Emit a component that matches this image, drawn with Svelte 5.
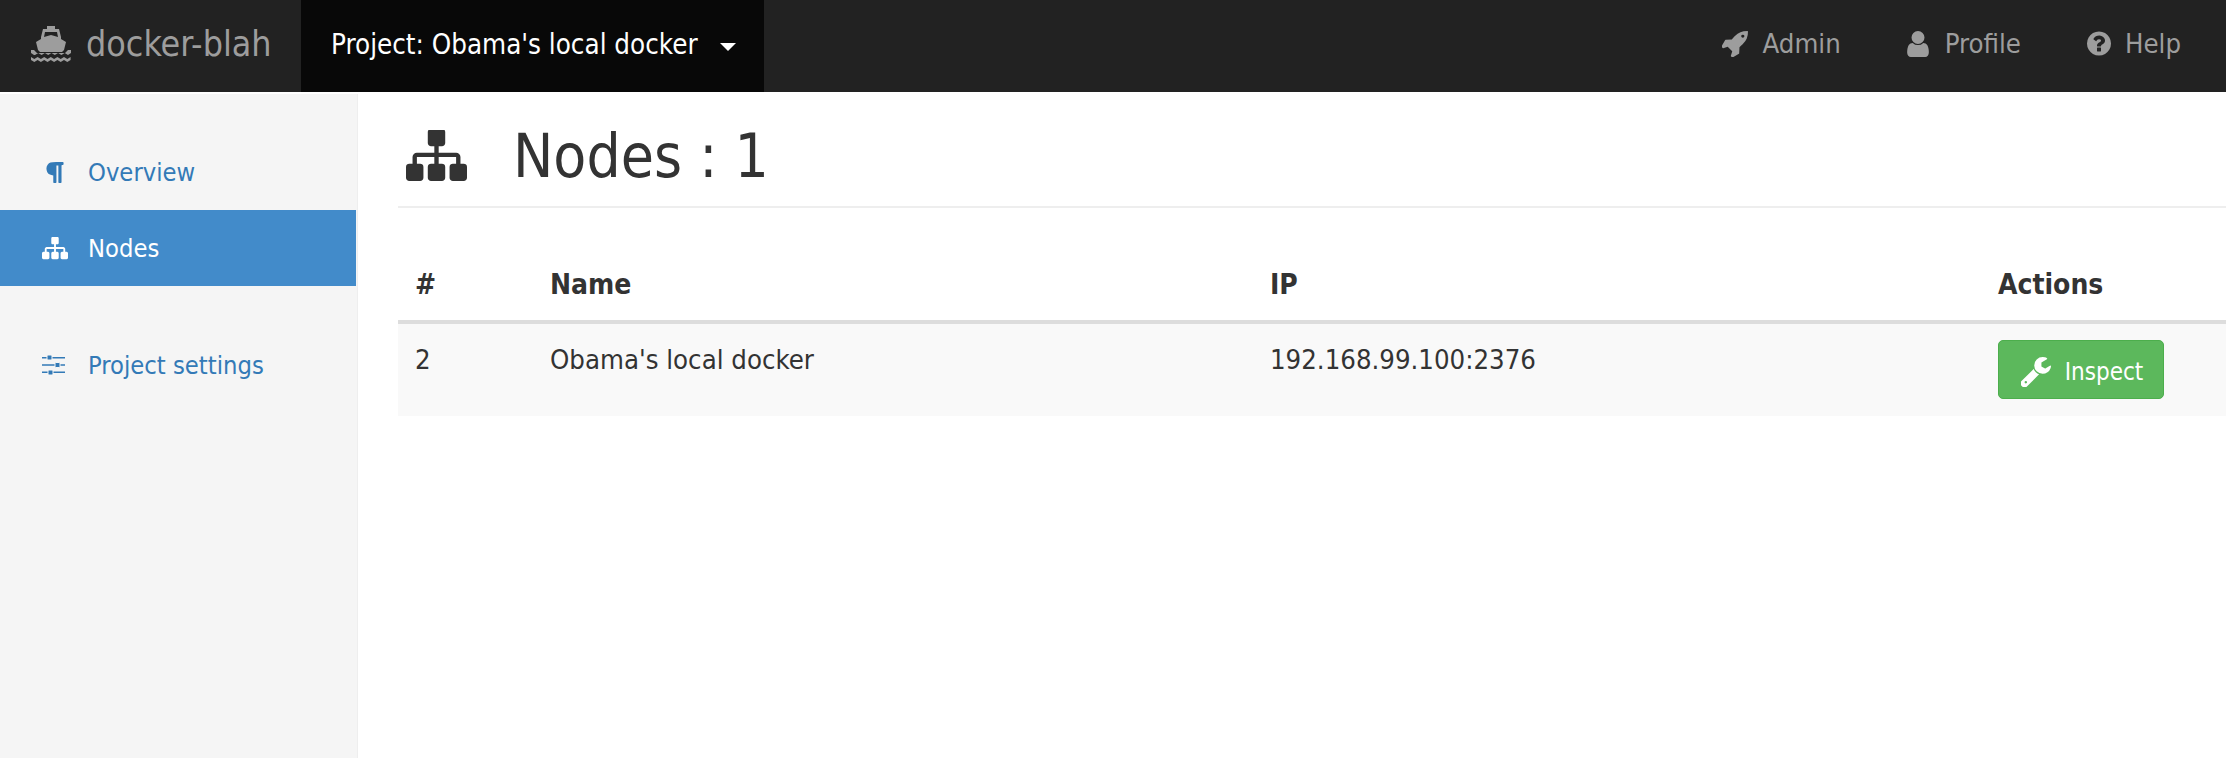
<script>
    const paths = {
        user: "M1536 1399q0 109-62.500 187t-150.500 78h-854q-88 0-150.500-78t-62.500-187q0-85 8.500-160.500t31.500-152 58.500-131 94-89 134.500-34.500q131 128 313 128t313-128q76 0 134.500 34.500t94 89 58.500 131 31.500 152 8.500 160.500zm-256-887q0 159-112.500 271.500t-271.500 112.500-271.500-112.500-112.500-271.500 112.500-271.500 271.500-112.500 271.500 112.500 112.500 271.500z",
        help: "M1024 1376v-192q0-14-9-23t-23-9h-192q-14 0-23 9t-9 23v192q0 14 9 23t23 9h192q14 0 23-9t9-23zm256-672q0-88-55.500-163t-138.500-116-170-41q-243 0-371 213-15 24 8 42l132 100q7 6 19 6 16 0 25-12 53-68 86-92 34-24 86-24 48 0 85.500 26t37.500 59q0 38-20 61t-68 45q-63 28-115.500 86.500t-52.500 125.500v36q0 14 9 23t23 9h192q14 0 23-9t9-23q0-19 21.500-49.500t54.500-49.500q32-18 49-28.500t46-35 44.500-48 28-60.500 12.500-81zm384 192q0 209-103 385.500t-279.500 279.500-385.500 103-385.500-103-279.500-279.500-103-385.500 103-385.500 279.500-279.500 385.500-103 385.500 103 279.500 279.500 103 385.500z",
        rocket: "M1504 448q0-40-28-68t-68-28-68 28-28 68 28 68 68 28 68-28 28-68zm224-288q0 249-75.500 430.500t-253.500 360.500q-81 80-195 176l-20 379q-2 16-16 26l-384 224q-7 4-16 4-12 0-23-9l-64-64q-13-14-8-32l85-276-281-281-276 85q-3 1-9 1-14 0-23-9l-64-64q-17-19-5-39l224-384q10-14 26-16l379-20q96-114 176-195 188-187 358-258t431-71q14 0 24 9.500t10 22.500z",
        wrench: "M448 1472q0-26-19-45t-45-19-45 19-19 45 19 45 45 19 45-19 19-45zm644-420l-682 682q-37 37-90 37-52 0-91-37l-106-108q-38-36-38-90 0-53 38-91l681-681q39 98 114.500 173.500t173.500 114.500zm634-435q0 39-23 106-47 134-164.500 217.500t-258.500 83.500q-185 0-316.500-131.500t-131.500-316.500 131.500-316.500 316.500-131.500q58 0 121.500 16.500t107.500 46.500q16 11 16 28t-16 28l-293 169v224l193 107q5-3 79-48.500t135.500-81 70.500-35.500q15 0 23.500 10t8.500 25z",
        sitemap: "M1792 1248v320q0 40-28 68t-68 28h-320q-40 0-68-28t-28-68v-320q0-40 28-68t68-28h96v-192h-512v192h96q40 0 68 28t28 68v320q0 40-28 68t-68 28h-320q-40 0-68-28t-28-68v-320q0-40 28-68t68-28h96v-192h-512v192h96q40 0 68 28t28 68v320q0 40-28 68t-68 28h-320q-40 0-68-28t-28-68v-320q0-40 28-68t68-28h96v-192q0-52 38-90t90-38h512v-192h-96q-40 0-68-28t-28-68v-320q0-40 28-68t68-28h320q40 0 68 28t28 68v320q0 40-28 68t-68 28h-96v192h512q52 0 90 38t38 90v192h96q40 0 68 28t28 68z",
        paragraph: "M1534 189v73q0 29-18.500 61t-42.500 32q-50 0-54 1-26 6-32 31-3 11-3 64v1152q0 25-18 43t-43 18h-108q-25 0-43-18t-18-43v-1218h-143v1218q0 25-17.500 43t-43.500 18h-108q-26 0-43.500-18t-17.500-43v-496q-147-12-245-59-126-58-192-179-64-117-64-259 0-166 88-286 88-118 209-159 111-37 417-37h479q25 0 43 18t18 43z"
    };

    const rows = [{ id: 2, name: "Obama's local docker", ip: "192.168.99.100:2376" }];
</script>

<header class="navbar">
    <div class="brand">
        <svg class="ship" viewBox="0 0 40 36" aria-hidden="true">
            <path d="M16 0h8v3h4l2 8v2l5 3-2 8-2 2H9l-2-2-2-8 5-3v-2l2-8h4zM14 6l-1 5 7-2 7 2-1-5z" fill-rule="evenodd" />
            <path d="M0 24h3l3 3h28l3-3h3v3l-3 2-3.300-2-3.300 2-3.300-2-3.300 2-3.300-2-3.300 2-3.300-2-3.300 2-3.300-2-3.300 2L3 29l-3-2z" />
            <path d="M0 31l3.300 2 3.300-2 3.300 2 3.300-2 3.300 2 3.300-2 3.300 2 3.300-2 3.300 2 3.300-2 3.300 2 3.300-2v3l-3.300 2-3.300-2-3.300 2-3.300-2-3.300 2-3.300-2-3.300 2-3.300-2-3.300 2-3.300-2-3.300 2-3.300-2z" />
        </svg>
        <span>docker-blah</span>
    </div>
    <div class="project">
        <span>Project: Obama's local docker</span>
        <i class="caret"></i>
    </div>
    <nav class="links">
        <a href="#admin"><svg class="i-rocket" viewBox="128 128 1600 1600"><path d={paths.rocket} /></svg>Admin</a>
        <a class="wide" href="#profile"><svg class="i-user" viewBox="256 128 1280 1536"><path d={paths.user} /></svg>Profile</a>
        <a href="#help"><svg class="i-help" viewBox="128 128 1536 1536"><path d={paths.help} /></svg>Help</a>
    </nav>
</header>

<div class="body">
    <aside class="sidebar">
        <a class="item" href="#overview">
            <span class="slot"><svg class="i-para" viewBox="280 128 1254 1536"><path d={paths.paragraph} /></svg></span>
            Overview
        </a>
        <a class="item active" href="#nodes">
            <span class="slot"><svg class="i-map" viewBox="0 192 1792 1472"><path d={paths.sitemap} /></svg></span>
            Nodes
        </a>
        <a class="item spaced" href="#settings">
            <span class="slot">
                <svg class="i-sliders" viewBox="0 0 23 20">
                    <path d="M0 2h23v1.500H0zM0 9.300h23v1.500H0zM0 16.500h23V18H0z" />
                    <rect x="5" y="0" width="5" height="5" rx="1" stroke="#f5f5f5" />
                    <rect x="13" y="7.500" width="5" height="5" rx="1" stroke="#f5f5f5" />
                    <rect x="6" y="15" width="5" height="5" rx="1" stroke="#f5f5f5" />
                </svg>
            </span>
            Project settings
        </a>
    </aside>

    <main class="content">
        <div class="page-head">
            <svg class="i-title" viewBox="0 192 1792 1472"><path d={paths.sitemap} /></svg>
            <h1>Nodes : 1</h1>
        </div>

        <table>
            <thead>
                <tr>
                    <th class="c-id">#</th>
                    <th class="c-name">Name</th>
                    <th class="c-ip">IP</th>
                    <th>Actions</th>
                </tr>
            </thead>
            <tbody>
                {#each rows as row}
                    <tr>
                        <td>{row.id}</td>
                        <td>{row.name}</td>
                        <td>{row.ip}</td>
                        <td>
                            <button>
                                <svg viewBox="128 128 1598 1600"><path d={paths.wrench} /></svg>
                                Inspect
                            </button>
                        </td>
                    </tr>
                {/each}
            </tbody>
        </table>
    </main>
</div>

<style>
    :global(body) {
        background: #fff;
        color: #333;
        font-family: "DejaVu Sans", sans-serif;
        font-stretch: condensed;
        font-size: 27.3px;
        height: 758px;
        overflow: hidden;
    }

    svg {
        fill: currentColor;
        display: block;
    }

    a {
        text-decoration: none;
    }

    .navbar {
        display: flex;
        height: 92px;
        background: #222;
        color: #9d9d9d;
        align-items: stretch;
    }

    .brand {
        width: 301px;
        box-sizing: border-box;
        padding: 0 0 5px 31px;
        display: flex;
        align-items: center;
        gap: 15px;
        font-size: 35.500px;
    }

    .ship {
        width: 40px;
        height: 36px;
        margin-top: 1px;
    }

    .project {
        width: 463px;
        box-sizing: border-box;
        background: #080808;
        color: #fff;
        padding: 0 0 5px 30px;
        display: flex;
        align-items: center;
        gap: 22px;
        font-size: 27.500px;
    }

    .caret {
        width: 0;
        height: 0;
        border-top: 8px solid #fff;
        border-left: 8px solid transparent;
        border-right: 8px solid transparent;
        margin-top: 6px;
    }

    .links {
        margin-left: auto;
        padding: 0 45px 5px 0;
        display: flex;
        align-items: center;
        gap: 66px;
    }

    .links a {
        color: #9d9d9d;
        display: flex;
        align-items: center;
        gap: 14px;
    }

    .links a.wide {
        gap: 16px;
    }

    .i-rocket { width: 26px; height: 26px; }
    .i-user { width: 22px; height: 26px; }
    .i-help { width: 24px; height: 25px; }

    .body {
        display: flex;
        height: 666px;
    }

    .sidebar {
        width: 357px;
        box-sizing: content-box;
        margin-top: 2px;
        padding-top: 40px;
        background: #f5f5f5;
        border-right: 1px solid #eee;
        font-size: 25.300px;
    }

    .item {
        display: flex;
        align-items: center;
        height: 76px;
        width: 356px;
        color: #337ab7;
    }

    .item.active {
        background: #428bca;
        color: #fff;
    }

    .item.spaced {
        margin-top: 41px;
    }

    .slot {
        width: 88px;
        padding-left: 42px;
        box-sizing: border-box;
    }

    .i-para { width: 18px; height: 21px; margin-left: 4px; }
    .i-map { width: 26px; height: 23px; }
    .i-sliders { width: 23px; height: 20px; }

    .content {
        flex: 1;
        padding-left: 40px;
    }

    .page-head {
        display: flex;
        align-items: center;
        box-sizing: border-box;
        height: 116px;
        padding-top: 14px;
        border-bottom: 2px solid #eee;
        color: #333;
    }

    .i-title {
        width: 61px;
        height: 52px;
        margin-left: 8px;
        margin-right: 46px;
    }

    h1 {
        margin: 0;
        font-weight: 400;
        font-size: 60px;
    }

    table {
        width: 100%;
        margin-top: 40px;
        border-collapse: collapse;
        table-layout: fixed;
    }

    th {
        text-align: left;
        font-weight: 700;
        font-size: 28px;
        height: 72px;
        padding: 0 17px;
        border-bottom: 4px solid #ddd;
    }

    .c-id { width: 101px; }
    .c-name { width: 686px; }
    .c-ip { width: 694px; }

    td {
        background: #f9f9f9;
        height: 94px;
        padding: 20px 17px 0;
        vertical-align: top;
        box-sizing: border-box;
    }

    td:last-child {
        padding-top: 16px;
    }

    button {
        width: 166px;
        height: 59px;
        box-sizing: border-box;
        display: flex;
        align-items: center;
        justify-content: center;
        gap: 14px;
        background: #5cb85c;
        border: 1px solid #4cae4c;
        border-radius: 5px;
        color: #fff;
        font: inherit;
        font-stretch: condensed;
        font-size: 24px;
        padding: 4px 0 0 2px;
    }

    button svg {
        width: 30px;
        height: 30px;
    }
</style>
